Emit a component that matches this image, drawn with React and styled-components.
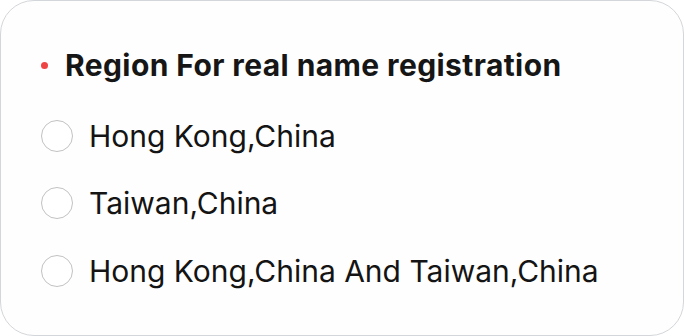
import React from 'react';
import styled, { createGlobalStyle } from 'styled-components';

const GlobalStyle = createGlobalStyle`
	html, body {
		margin: 0;
		padding: 0;
		background: #ffffff;
	}
	body {
		font-family: Inter, 'Noto Sans', sans-serif;
		-webkit-font-smoothing: antialiased;
	}
`;

const Card = styled.section`
	box-sizing: border-box;
	width: 684px;
	height: 336px;
	padding: 46px 40px 0 40px;
	border: 1px solid #d3d6da;
	border-radius: 34px;
	background: #fefefe;
	display: flex;
	flex-direction: column;
`;

const Title = styled.h2`
	margin: 0;
	display: flex;
	align-items: center;
	gap: 17px;
	height: 36px;
	font-size: 30px;
	font-weight: 700;
	line-height: 36px;
	color: #161616;
	letter-spacing: 0.4px;
`;

const Dot = styled.span`
	width: 7px;
	height: 7px;
	border-radius: 50%;
	background: #ef4444;
	flex: none;
`;

const Options = styled.div`
	display: flex;
	flex-direction: column;
	margin-top: 19px;
`;

const Option = styled.label`
	display: flex;
	align-items: center;
	gap: 16px;
	height: 67.5px;
	font-size: 30px;
	font-weight: 400;
	line-height: 36px;
	color: #141414;
	cursor: pointer;
`;

const Radio = styled.span`
	box-sizing: border-box;
	width: 32px;
	height: 32px;
	flex: none;
	border-radius: 50%;
	border: 1.5px solid ${(p) => (p.checked ? '#ef4444' : '#c2c2c2')};
	background: #ffffff;
`;

const regions = [
	'Hong Kong,China',
	'Taiwan,China',
	'Hong Kong,China And Taiwan,China'
];

const App = () => {
	return (
		<>
			<GlobalStyle />
			<Card>
				<Title>
					<Dot />
					Region For real name registration
				</Title>
				<Options>
					{regions.map((r) => (
						<Option key={r}>
							<Radio />
							{r}
						</Option>
					))}
				</Options>
			</Card>
		</>
	);
};

export default App;
